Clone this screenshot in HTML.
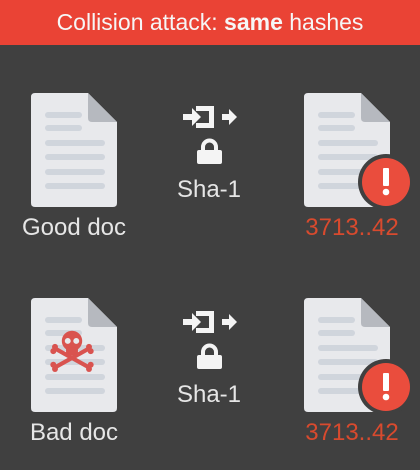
<!DOCTYPE html>
<html><head><style>
body{margin:0;width:420px;height:470px;background:#404040;overflow:hidden;font-family:"Liberation Sans",sans-serif;position:relative}
.hdr{position:absolute;left:0;top:0;width:420px;height:45px;background:#ea4335;color:#f6f6f6;font-size:23px;text-align:center;line-height:44px}
.t{position:absolute;font-size:24px;color:#e6e6e6;text-align:center;width:160px}
.r{color:#d84a2e}
svg{position:absolute}
</style></head><body>
<div class="hdr">Collision attack: <b>same</b> hashes</div>
<svg width="420" height="470" style="left:0;top:0">
<defs>
<g id="doc">
<path d="M4 0H57L86 29V110Q86 114 82 114H4Q0 114 0 110V4Q0 0 4 0Z" fill="#e8e9ec"/>
<path d="M57 0L86 29H61Q57 29 57 25Z" fill="#b6b9bf"/>
<g stroke="#d0d5dc" stroke-width="6" stroke-linecap="round">
<line x1="17" y1="22" x2="48" y2="22"/><line x1="17" y1="35" x2="48" y2="35"/>
<line x1="17" y1="50" x2="71" y2="50"/><line x1="17" y1="64" x2="71" y2="64"/>
<line x1="17" y1="79" x2="71" y2="79"/><line x1="17" y1="93" x2="71" y2="93"/>
</g></g>
<g id="hash" fill="#f4f4f4">
<rect x="0" y="8" width="12" height="6"/>
<path d="M9 2L18 11L9 20Z"/>
<path d="M13 0H31V22H13V17H26V5H13Z"/>
<path d="M39 8H46V3L54 11L46 19V14H39Z"/>
<path d="M20 46V41a6.5 6.5 0 0 1 13 0V46" fill="none" stroke="#f4f4f4" stroke-width="4"/>
<rect x="14" y="44" width="25" height="14" rx="2"/>
</g>
<g id="alert">
<circle r="28" fill="#404040"/><circle r="24" fill="#ea4d3d"/>
<rect x="-3" y="-14" width="6" height="18" rx="1" fill="#fff"/><circle cy="10" r="3.3" fill="#fff"/>
</g>
</defs>
<use href="#doc" x="31" y="93"/>
<use href="#hash" x="183" y="106"/>
<use href="#doc" x="304" y="93"/>
<use href="#alert" x="386" y="182"/>
<use href="#doc" x="31" y="298"/>
<use href="#hash" x="183" y="311"/>
<use href="#doc" x="304" y="298"/>
<use href="#alert" x="386" y="387"/>
<g fill="#d9534f" transform="translate(72,352) scale(0.85)">
<circle cx="0" cy="-13" r="12"/><rect x="-7" y="-5" width="14" height="9" rx="2"/>
<g stroke="#d9534f" stroke-width="5" stroke-linecap="round">
<line x1="-18" y1="-3" x2="18" y2="17"/><line x1="18" y1="-3" x2="-18" y2="17"/></g>
<circle cx="-20" cy="-6" r="3.5"/><circle cx="-22" cy="-1" r="3.5"/>
<circle cx="20" cy="-6" r="3.5"/><circle cx="22" cy="-1" r="3.5"/>
<circle cx="-20" cy="20" r="3.5"/><circle cx="-22" cy="15" r="3.5"/>
<circle cx="20" cy="20" r="3.5"/><circle cx="22" cy="15" r="3.5"/>
<circle cx="-5" cy="-13" r="3.5" fill="#e8e9ec"/><circle cx="5" cy="-13" r="3.5" fill="#e8e9ec"/>
</g>
</svg>
<div class="t" style="left:-6px;top:214px">Good doc</div>
<div class="t" style="left:129px;top:176px">Sha-1</div>
<div class="t r" style="left:272px;top:214px">3713..42</div>
<div class="t" style="left:-6px;top:419px">Bad doc</div>
<div class="t" style="left:129px;top:381px">Sha-1</div>
<div class="t r" style="left:272px;top:419px">3713..42</div>
</body></html>
